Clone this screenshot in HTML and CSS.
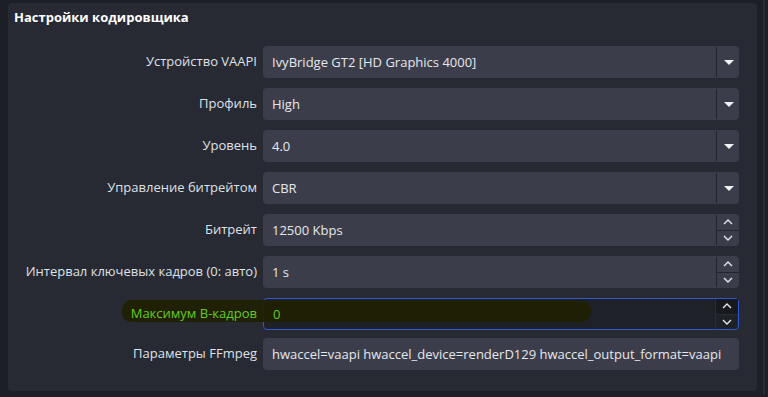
FILE: index.html
```html
<!DOCTYPE html>
<html lang="ru">
<head>
<meta charset="utf-8">
<link rel="stylesheet" href="styles.css">
</head>
<body>
<div class="page">
  <section class="panel">
    <h2 class="title">Настройки кодировщика</h2>
    <div class="form">
      <div class="row">
        <label class="lbl">Устройство VAAPI</label>
        <div class="field combo"><span class="val">IvyBridge GT2 [HD Graphics 4000]</span><span class="drop"><i class="tri"></i></span></div>
      </div>
      <div class="row">
        <label class="lbl">Профиль</label>
        <div class="field combo"><span class="val">High</span><span class="drop"><i class="tri"></i></span></div>
      </div>
      <div class="row">
        <label class="lbl">Уровень</label>
        <div class="field combo"><span class="val">4.0</span><span class="drop"><i class="tri"></i></span></div>
      </div>
      <div class="row">
        <label class="lbl">Управление битрейтом</label>
        <div class="field combo"><span class="val">CBR</span><span class="drop"><i class="tri"></i></span></div>
      </div>
      <div class="row">
        <label class="lbl">Битрейт</label>
        <div class="field spin"><span class="val">12500 Kbps</span>
          <span class="btns"><span class="btn"><svg width="10" height="6" viewBox="0 0 10 6"><path d="M1 5 L5 1 L9 5" fill="none" stroke="#e8e9ee" stroke-width="1.4"/></svg></span><span class="btn"><svg width="10" height="6" viewBox="0 0 10 6"><path d="M1 1 L5 5 L9 1" fill="none" stroke="#e8e9ee" stroke-width="1.4"/></svg></span></span>
        </div>
      </div>
      <div class="row">
        <label class="lbl">Интервал ключевых кадров (0: авто)</label>
        <div class="field spin"><span class="val">1 s</span>
          <span class="btns"><span class="btn"><svg width="10" height="6" viewBox="0 0 10 6"><path d="M1 5 L5 1 L9 5" fill="none" stroke="#e8e9ee" stroke-width="1.4"/></svg></span><span class="btn"><svg width="10" height="6" viewBox="0 0 10 6"><path d="M1 1 L5 5 L9 1" fill="none" stroke="#e8e9ee" stroke-width="1.4"/></svg></span></span>
        </div>
      </div>
      <div class="row hl-row">
        <label class="lbl green">Максимум B-кадров</label>
        <div class="field spin focus"><span class="val green">0</span>
          <span class="btns"><span class="btn hover"><svg width="10" height="6" viewBox="0 0 10 6"><path d="M1 5 L5 1 L9 5" fill="none" stroke="#e8e9ee" stroke-width="1.4"/></svg></span><span class="btn"><svg width="10" height="6" viewBox="0 0 10 6"><path d="M1 1 L5 5 L9 1" fill="none" stroke="#e8e9ee" stroke-width="1.4"/></svg></span></span>
        </div>
        <span class="marker"></span>
      </div>
      <div class="row last">
        <label class="lbl">Параметры FFmpeg</label>
        <div class="field text"><span class="val">hwaccel=vaapi hwaccel_device=renderD129 hwaccel_output_format=vaapi</span></div>
      </div>
    </div>
  </section>
  <div class="rail"></div>
</div>
</body>
</html>
```
FILE: styles.css
```css
* { box-sizing: border-box; }
html, body { margin: 0; padding: 0; }
body {
  width: 768px;
  height: 397px;
  overflow: hidden;
  background: #1d1f26;
  font-family: "Open Sans", "Noto Sans", sans-serif;
  font-size: 13px;
  color: #dfe1e8;
}
.page {
  display: flex;
  padding: 3px 0 0 8px;
  height: 397px;
}
.panel {
  width: 749px;
  height: 388px;
  background: #272a33;
  border-radius: 4px;
  padding: 0 18px 0 0;
  position: relative;
}
.rail {
  margin-left: 6px;
  width: 2px;
  height: 394px;
  margin-top: -3px;
  background: #2a2c35;
}
.title {
  margin: 0;
  padding: 4px 0 0 6px;
  font-size: 13px;
  font-weight: 700;
  color: #ffffff;
  height: 43px;
  line-height: 20px;
}
.form {
  display: flex;
  flex-direction: column;
  gap: 10px;
}
.row {
  display: flex;
  align-items: center;
  gap: 6px;
  height: 32px;
  position: relative;
}
.row.last { margin-top: -2px; }
.lbl {
  width: 249px;
  text-align: right;
  white-space: nowrap;
  position: relative;
  padding-bottom: 2px;
}
.field {
  flex: 1;
  height: 32px;
  background: #3b3e4a;
  border-radius: 4px;
  display: flex;
  align-items: center;
}
.val {
  flex: 1;
  padding-left: 9px;
  white-space: nowrap;
  color: #e6e7ec;
  padding-bottom: 1px;
}
.drop {
  width: 23px;
  height: 30px;
  border-left: 1px solid #23252c;
  display: flex;
  align-items: center;
  justify-content: center;
}
.tri {
  width: 0;
  height: 0;
  border-left: 5px solid transparent;
  border-right: 5px solid transparent;
  border-top: 5px solid #f2f3f6;
  margin-left: 1px;
}
.btns {
  width: 23px;
  height: 30px;
  border-left: 1px solid #23252c;
  display: flex;
  flex-direction: column;
}
.btn {
  flex: 1;
  display: flex;
  align-items: center;
  justify-content: center;
}
.btn + .btn { border-top: 1px solid #23252c; }
.focus {
  background: #1f2128;
  border: 1px solid #2f58d0;
}
.focus .btns { height: 30px; border-left-color: #2a2c34; }
.focus .btn.hover { background: #17191e; }
.focus .btn + .btn { border-top-color: #2a2c34; }
.green { color: #63cc21; }
.marker {
  position: absolute;
  left: 114px;
  top: 2px;
  width: 469px;
  height: 22px;
  background: rgba(31, 31, 0, 0.92);
  border-radius: 11px 12px 12px 10px;
  z-index: 1;
}
.hl-row .lbl { z-index: 2; }
.hl-row .val { position: relative; z-index: 2; }
```
